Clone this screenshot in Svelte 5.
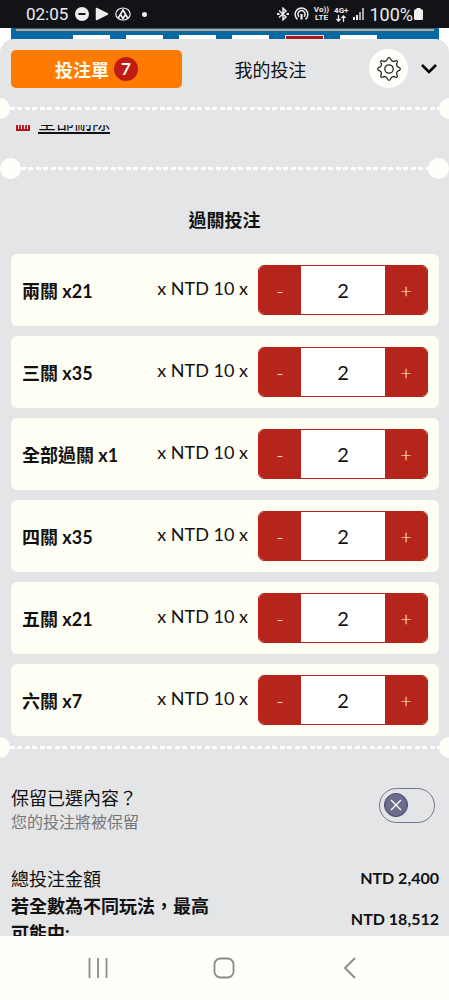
<script lang="ts">
  type Bet = { id: string; name: string; count: number; stake: number };

  let bets = $state<Bet[]>([
    { id: 'double', name: '兩關', count: 21, stake: 2 },
    { id: 'treble', name: '三關', count: 35, stake: 2 },
    { id: 'all', name: '全部過關', count: 1, stake: 2 },
    { id: 'four', name: '四關', count: 35, stake: 2 },
    { id: 'five', name: '五關', count: 21, stake: 2 },
    { id: 'six', name: '六關', count: 7, stake: 2 }
  ]);

  const UNIT = 10;
  const maxPayout = 18512;
  const siteTabs = [0, 1, 2, 3, 4, 5];

  let keepSelections = $state(false);
  let total = $derived(bets.reduce((sum, b) => sum + b.count * b.stake * UNIT, 0));

  function step(bet: Bet, by: number) {
    bet.stake = Math.max(0, Number(bet.stake) + by);
  }
</script>

{#snippet perforation(inset: boolean)}
  <div class="perforation" class:inset>
    <span class="hole"></span>
    <span class="dashes"></span>
    <span class="hole"></span>
  </div>
{/snippet}

<div class="phone" lang="zh-Hant-TW">
  <div class="status-bar">
    <span class="clock">02:05</span>
    <svg width="14" height="14" viewBox="0 0 14 14">
      <circle cx="7" cy="7" r="7" fill="#eee" />
      <path d="M3.5 7h7" stroke="#121317" stroke-width="2" />
    </svg>
    <svg width="14" height="14" viewBox="0 0 14 14">
      <path d="M1.5 1.5v11L12.500 7z" fill="#eee" stroke="#eee" stroke-width="1.500" stroke-linejoin="round" />
    </svg>
    <svg width="16" height="14" viewBox="0 0 16 14" fill="none" stroke="#eee">
      <ellipse cx="8" cy="7" rx="7.200" ry="6" stroke-width="1.200" />
      <path d="M3 11.500 8 3l5 8.500M5.800 8 8 11.500 10.200 8" stroke-width="1.700" />
    </svg>
    <span class="dot"></span>
    <span class="spacer"></span>
    <div class="signals">
      <svg width="12" height="14" viewBox="0 0 12 14" fill="none" stroke="#eee" stroke-width="1.500">
        <path d="M2 3.500 9 10 6 12.800V1.200L9 4l-7 6.500" />
        <path d="M0 7h2.500M9.500 7H12" stroke-width="2" />
      </svg>
      <svg width="15" height="14" viewBox="0 0 15 14" fill="none" stroke="#eee" stroke-width="1.500">
        <path d="M3.500 12.300a6.400 6.400 0 1 1 8 0" />
        <path d="M5 9.800a3.600 3.600 0 1 1 5 0" />
        <path d="M7.500 7v5.500" stroke-width="2.200" />
      </svg>
      <span class="carrier">Vo))<br />LTE</span>
      <span class="carrier">4G+
        <svg width="10" height="7" viewBox="0 0 10 7" fill="none" stroke="#eee" stroke-width="1.300">
          <path d="M2.500 0v6M.5 4l2 2 2-2M7.500 7V1M5.500 3l2-2 2 2" />
        </svg>
      </span>
      <svg width="11" height="12" viewBox="0 0 11 12" fill="#eee">
        <path d="M0 9h2v3H0zM3 7h2v5H3z" />
        <path d="M6 4h2v8H6zM9 0h2v12H9z" fill="#aaa" />
      </svg>
    </div>
    <span class="battery-text">100%</span>
    <svg width="9" height="12" viewBox="0 0 9 12">
      <path d="M2.500 0h4v1.200h1a1.500 1.500 0 0 1 1.500 1.500v7.800a1.500 1.500 0 0 1-1.500 1.500h-6a1.500 1.500 0 0 1-1.500-1.500V2.700a1.500 1.500 0 0 1 1.500-1.500h1z" fill="#eee" />
    </svg>
  </div>

  <div class="site">
    <div class="site-tabs">
      {#each siteTabs as tab}
        <span class="site-tab" class:active={tab === 4}></span>
      {/each}
    </div>
  </div>

  <div class="sheet">
    <header>
      <button class="tab selected">投注單 <span class="badge">7</span></button>
      <button class="tab">我的投注</button>
      <button class="settings" aria-label="設定">
        <svg width="26" height="26" viewBox="0 0 26 26" fill="none" stroke="#222" stroke-width="1.300" stroke-linejoin="round">
          <path d="M11.300 3.200 Q13 .200 14.700 3.200 Q15 4.600 16.500 5.200 Q18 5.900 19 5 Q22.200 3.800 21 7 Q20.100 8 20.800 9.500 Q21.400 11 22.800 11.300 Q25.800 13 22.800 14.700 Q21.400 15 20.800 16.500 Q20.100 18 21 19 Q22.200 22.200 19 21 Q18 20.100 16.500 20.800 Q15 21.400 14.700 22.800 Q13 25.800 11.300 22.800 Q11 21.400 9.500 20.800 Q8 20.100 7 21 Q3.800 22.200 5 19 Q5.900 18 5.200 16.500 Q4.600 15 3.200 14.700 Q.200 13 3.200 11.300 Q4.600 11 5.200 9.500 Q5.900 8 5 7 Q3.800 3.800 7 5 Q8 5.900 9.500 5.200 Q11 4.600 11.300 3.200z" />
          <circle cx="13" cy="13" r="4.200" />
        </svg>
      </button>
      <button class="collapse" aria-label="收起">
        <svg width="18" height="12" viewBox="0 0 18 12" fill="none" stroke="#000" stroke-width="2.600">
          <path d="M2 2l7 7 7-7" />
        </svg>
      </button>
    </header>

    {@render perforation(false)}

    <main>
      <div class="clear-row">
        <button class="clear">
          <svg width="14" height="18" viewBox="0 0 14 18" fill="none" stroke="#b7131a" stroke-width="2">
            <path d="M0 2h14M5 1h4M1 4v13h12V4" />
            <path d="M4 5v11M7 5v11M10 5v11" stroke-width="1.800" />
          </svg>
          <span>全部刪除</span>
        </button>
      </div>

      {@render perforation(true)}

      <h2>過關投注</h2>

      <div class="bets">
        {#each bets as bet (bet.id)}
          <div class="bet">
            <label class="name" for="stake-{bet.id}">{bet.name} x{bet.count}</label>
            <span class="unit">x NTD {UNIT} x</span>
            <div class="stepper">
              <button aria-label="減少" onclick={() => step(bet, -1)}>-</button>
              <input id="stake-{bet.id}" type="text" inputmode="numeric" bind:value={bet.stake} />
              <button aria-label="增加" onclick={() => step(bet, 1)}>+</button>
            </div>
          </div>
        {/each}
      </div>

      {@render perforation(false)}

      <div class="keep">
        <label for="keep">
          <span class="keep-title">保留已選內容？</span>
          <span class="keep-hint">您的投注將被保留</span>
        </label>
        <div class="toggle" class:on={keepSelections}>
          <input id="keep" type="checkbox" role="switch" bind:checked={keepSelections} />
          <span class="knob">
            <svg width="12" height="12" viewBox="0 0 12 12" stroke="#fff" stroke-width="1.300">
              <path d="M1 1l10 10M11 1L1 11" />
            </svg>
          </span>
        </div>
      </div>

      <dl class="totals">
        <div>
          <dt>總投注金額</dt>
          <dd>NTD {total.toLocaleString('en-US')}</dd>
        </div>
        <div>
          <dt class="strong">若全數為不同玩法，最高可能中:</dt>
          <dd>NTD {maxPayout.toLocaleString('en-US')}</dd>
        </div>
      </dl>
    </main>
  </div>

  <nav>
    <button aria-label="最近">
      <svg width="22" height="22" viewBox="0 0 22 22" stroke="#8b8b88" stroke-width="1.800">
        <path d="M2.500 1v20M11 1v20M19.500 1v20" />
      </svg>
    </button>
    <button aria-label="首頁">
      <svg width="22" height="22" viewBox="0 0 22 22" fill="none" stroke="#8b8b88" stroke-width="1.800">
        <rect x="1.500" y="1.500" width="19" height="19" rx="6" />
      </svg>
    </button>
    <button aria-label="返回">
      <svg width="22" height="22" viewBox="0 0 22 22" fill="none" stroke="#8b8b88" stroke-width="1.800">
        <path d="M16 1L6 11l10 10" />
      </svg>
    </button>
  </nav>
</div>

<style>
  :global(body) {
    margin: 0;
    background: #fff;
  }

  .phone {
    display: flex;
    flex-direction: column;
    height: 100vh;
    overflow: hidden;
    font-family: Lato, 'Noto Sans CJK TC', sans-serif;
    font-size: 18px;
    color: #111;
  }

  button, input {
    font: inherit;
    color: inherit;
    margin: 0;
    padding: 0;
    border: 0;
    background: none;
  }
  button { cursor: pointer; }
  svg { display: block; flex: none; }

  .status-bar {
    display: flex;
    align-items: center;
    gap: 6px;
    height: 28px;
    flex: none;
    padding: 0 26px;
    background: #121317;
    color: #eee;
    font-family: Roboto, sans-serif;
    font-size: 17px;
  }
  .clock { margin-right: 1px; }
  .dot {
    width: 5px;
    height: 5px;
    margin-left: 5px;
    border-radius: 50%;
    background: #eee;
  }
  .spacer { flex: 1; }
  .signals {
    display: flex;
    align-items: center;
    gap: 5px;
  }
  .carrier {
    display: flex;
    flex-direction: column;
    align-items: center;
    font-size: 8px;
    font-weight: 700;
    line-height: 8px;
    text-align: center;
  }
  .battery-text {
    margin: 0 -5px 0 -1px;
    font-size: 18px;
  }

  .site {
    flex: none;
    height: 24px;
    margin: 0 10px -13px 11px;
    padding-top: 1px;
    box-sizing: border-box;
    background: #0868a3;
  }
  .site-tabs {
    display: flex;
    gap: 16px;
    height: 23px;
    margin: 0 5px;
    padding: 4px 57px 0;
    box-sizing: border-box;
    border-top: 2px solid #c5a583;
  }
  .site-tab {
    flex: 1;
    background: #fff;
  }
  .site-tab.active {
    background: #ad1a1f;
    border: 1px solid #efd5dc;
  }

  .sheet {
    display: flex;
    flex-direction: column;
    flex: 1;
    min-height: 0;
    border-radius: 14px 14px 0 0;
    background: #e4e5e7;
    overflow: hidden;
    position: relative;
  }

  header {
    display: flex;
    align-items: center;
    flex: none;
    padding: 10px 11px;
  }
  .tab {
    flex: 1;
    height: 38px;
    border-radius: 5px;
  }
  .tab.selected {
    display: flex;
    align-items: center;
    justify-content: center;
    gap: 5px;
    flex: none;
    width: 40%;
    background: #ff7a00;
    color: #fffef5;
    font-weight: 700;
  }
  .badge {
    width: 24px;
    height: 24px;
    border-radius: 50%;
    background: #c01a14;
    font-size: 17px;
    line-height: 24px;
    text-align: center;
  }
  .settings {
    display: flex;
    align-items: center;
    justify-content: center;
    width: 39px;
    height: 39px;
    margin: 0 12px 0 10px;
    border-radius: 50%;
    background: #fffefa;
  }

  .perforation {
    display: flex;
    align-items: center;
    flex: none;
    height: 21px;
    margin: 0 -11px;
  }
  .perforation.inset { margin: 0; }
  .hole {
    width: 21px;
    height: 21px;
    border-radius: 50%;
    background: #fffef8;
  }
  .dashes {
    flex: 1;
    height: 3px;
    background: repeating-linear-gradient(90deg, #fffefa 0 5px, transparent 5px 7px, #fffefa 7px 12px, transparent 12px 15px);
  }

  main {
    flex: 1;
    min-height: 0;
    margin-top: 6px;
    overflow: hidden;
  }

  /* row is scrolled most of the way under the header */
  .clear-row {
    display: flex;
    align-items: flex-end;
    height: 9px;
    margin-bottom: 24px;
    padding: 0 16px;
    overflow: hidden;
  }
  .clear {
    display: flex;
    align-items: center;
    gap: 8px;
    line-height: 24px;
    text-decoration: underline;
    text-decoration-thickness: 2px;
    text-underline-offset: 3px;
  }

  h2 {
    margin: 26px 0 19px;
    font-size: 18px;
    font-weight: 700;
    line-height: 30px;
    text-align: center;
  }

  .bets {
    display: flex;
    flex-direction: column;
    gap: 10px;
    margin-bottom: 1px;
    padding: 0 10px 0 11px;
  }
  .bet {
    display: flex;
    align-items: center;
    height: 72px;
    padding: 0 11px;
    box-sizing: border-box;
    border-radius: 6px;
    background: #fffef5;
  }
  .name {
    flex: 1;
    font-weight: 700;
  }
  .unit {
    margin-right: 10px;
    padding-bottom: 4px;
  }
  .stepper {
    display: flex;
    width: 170px;
    height: 50px;
    border: 1px solid #b5251b;
    border-radius: 6px;
    box-sizing: border-box;
    background: #fff;
    overflow: hidden;
  }
  .stepper button {
    flex: 1;
    background: #b5251b;
    color: #fff;
    font-size: 20px;
    font-weight: 300;
  }
  .stepper input {
    width: 50%;
    min-width: 0;
    text-align: center;
    font-size: 20px;
  }

  .keep {
    display: flex;
    align-items: center;
    justify-content: space-between;
    padding: 27px 14px 0 11px;
  }
  .keep label {
    display: flex;
    flex-direction: column;
  }
  .keep-title { line-height: 26px; }
  .keep-hint {
    font-size: 16px;
    line-height: 22px;
    color: #777;
  }
  .toggle {
    position: relative;
    width: 56px;
    height: 35px;
    margin-bottom: 8px;
    padding: 4px;
    box-sizing: border-box;
    border: 1px solid #74758a;
    border-radius: 18px;
  }
  .toggle input {
    position: absolute;
    inset: 0;
    width: 100%;
    height: 100%;
    opacity: 0;
    cursor: pointer;
  }
  .knob {
    display: flex;
    align-items: center;
    justify-content: center;
    width: 24px;
    height: 24px;
    box-sizing: border-box;
    border: 1px solid #44456d;
    border-radius: 50%;
    background: #6c6d8b;
  }
  .toggle.on .knob { margin-left: auto; }

  .totals {
    margin: 33px 0 0;
    padding: 0 10px 0 11px;
    line-height: 27px;
  }
  .totals div {
    display: flex;
    align-items: center;
    justify-content: space-between;
  }
  .totals dt { max-width: 200px; }
  .totals dt.strong { font-weight: 700; }
  .totals dd {
    margin: 0 0 4px;
    font-size: 16px;
    font-weight: 700;
    line-height: 23px;
  }

  nav {
    display: flex;
    align-items: center;
    justify-content: space-between;
    flex: none;
    height: 64px;
    padding: 0 88px 0 87px;
    background: #fffef8;
  }
</style>
